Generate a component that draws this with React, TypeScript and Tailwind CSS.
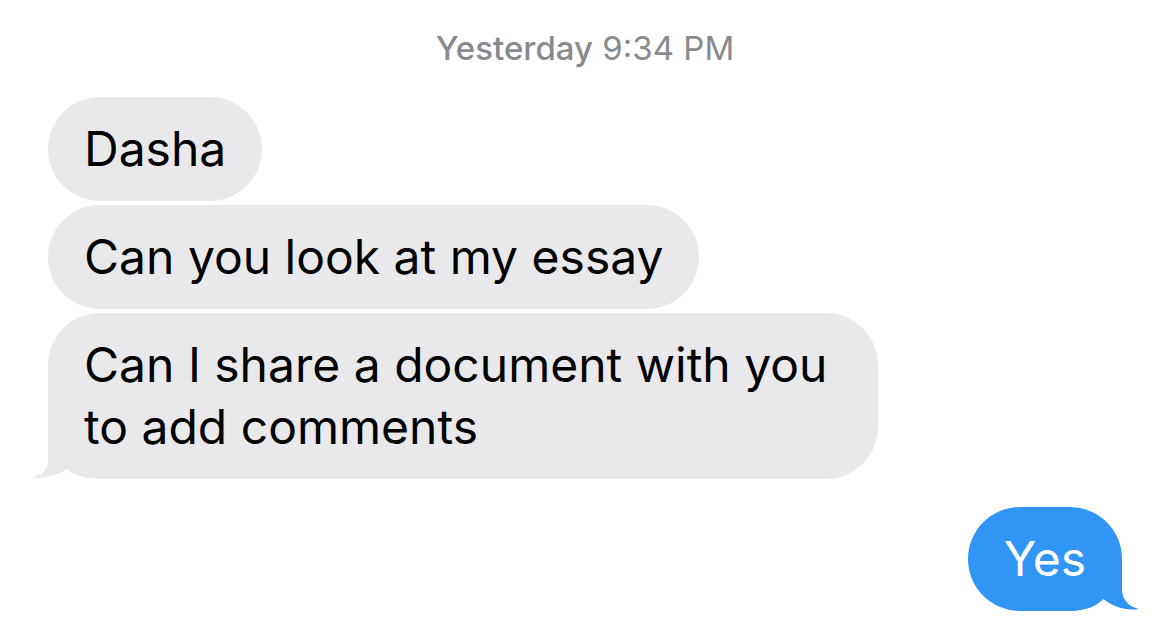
import React from 'react';

const font = { fontFamily: 'Inter, "Liberation Sans", Arial, sans-serif' };

const GrayTail: React.FC = () => (
  <svg className="absolute left-[-16px] bottom-0" width="80" height="64" viewBox="0 0 80 64">
    <path
      d="M16,0 L16,46 C16,55 9,61 0,63 C11,64 24,61 35,54 C41,60 50,64 80,64 L80,0 Z"
      fill="#e9e9eb"
    />
  </svg>
);

const BlueTail: React.FC = () => (
  <svg className="absolute right-[-17px] bottom-0" width="80" height="52" viewBox="0 0 80 52">
    <path
      d="M0,52 C28,52 37,48 44,40 C55,48 67,52 80,50 C71,48 63,42 63,30 L63,0 L0,0 Z"
      fill="#3095f5"
    />
  </svg>
);

const Received: React.FC<{ children: React.ReactNode; tail?: boolean }> = ({ children, tail }) => (
  <div className="relative inline-block max-w-[830px] rounded-[52px] bg-[#e9e9eb] px-[36px] py-[21px] text-[48px] leading-[62px] text-black self-start">
    {tail && <GrayTail />}
    <span className="relative">{children}</span>
  </div>
);

export default function App() {
  return (
    <div className="w-[1170px] h-[630px] bg-white overflow-hidden" style={font}>
      <div className="pt-[28px] text-center text-[33px] leading-[40px] text-[#8a8a8e]">
        <span className="font-medium">Yesterday</span> 9:34 PM
      </div>
      <div className="mt-[29px] flex flex-col gap-[4px] pl-[48px]">
        <Received>Dasha</Received>
        <Received>Can you look at my essay</Received>
        <Received tail>Can I share a document with you to add comments</Received>
      </div>
      <div className="mt-[28px] flex justify-end pr-[48px]">
        <div className="relative rounded-[52px] bg-[#3095f5] px-[36px] py-[21px] text-[48px] leading-[62px] text-white">
          <BlueTail />
          <span className="relative">Yes</span>
        </div>
      </div>
    </div>
  );
}
